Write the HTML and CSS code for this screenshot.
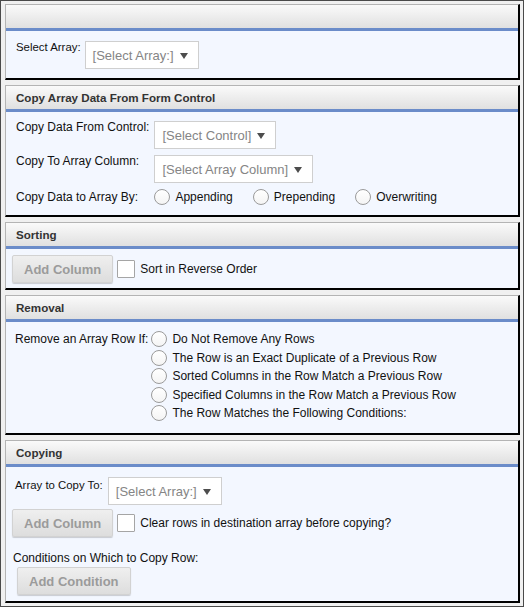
FILE: index.html
```html
<!DOCTYPE html>
<html>
<head>
<meta charset="utf-8">
<link rel="stylesheet" href="styles.css">
</head>
<body>
<div class="frame">
  <section class="panel">
    <div class="panel-head"></div>
    <div class="panel-body body-select">
      <span class="lbl lbl-sm">Select Array:</span>
      <span class="select">[Select Array:]<span class="caret"></span></span>
    </div>
  </section>

  <section class="panel">
    <div class="panel-head">Copy Array Data From Form Control</div>
    <div class="panel-body body-copyform">
      <span class="lbl">Copy Data From Control:</span>
      <div><span class="select">[Select Control]<span class="caret"></span></span></div>
      <span class="lbl">Copy To Array Column:</span>
      <div><span class="select">[Select Array Column]<span class="caret"></span></span></div>
      <span class="lbl lbl-radio">Copy Data to Array By:</span>
      <div class="radio-row">
        <label class="opt"><span class="radio"></span>Appending</label>
        <label class="opt"><span class="radio"></span>Prepending</label>
        <label class="opt"><span class="radio"></span>Overwriting</label>
      </div>
    </div>
  </section>

  <section class="panel">
    <div class="panel-head">Sorting</div>
    <div class="panel-body body-buttons">
      <span class="btn">Add Column</span>
      <span class="check"></span>
      <span class="txt">Sort in Reverse Order</span>
    </div>
  </section>

  <section class="panel">
    <div class="panel-head">Removal</div>
    <div class="panel-body body-removal">
      <span class="lbl lbl-radio">Remove an Array Row If:</span>
      <div class="radio-list">
        <label class="opt"><span class="radio"></span>Do Not Remove Any Rows</label>
        <label class="opt"><span class="radio"></span>The Row is an Exact Duplicate of a Previous Row</label>
        <label class="opt"><span class="radio"></span>Sorted Columns in the Row Match a Previous Row</label>
        <label class="opt"><span class="radio"></span>Specified Columns in the Row Match a Previous Row</label>
        <label class="opt"><span class="radio"></span>The Row Matches the Following Conditions:</label>
      </div>
    </div>
  </section>

  <section class="panel">
    <div class="panel-head">Copying</div>
    <div class="panel-body body-copying">
      <div class="row-select">
        <span class="lbl lbl-sm">Array to Copy To:</span>
        <span class="select">[Select Array:]<span class="caret"></span></span>
      </div>
      <div class="row-buttons">
        <span class="btn">Add Column</span>
        <span class="check"></span>
        <span class="txt">Clear rows in destination array before copying?</span>
      </div>
      <div class="cond-label">Conditions on Which to Copy Row:</div>
      <div class="row-cond">
        <span class="btn">Add Condition</span>
      </div>
    </div>
  </section>
</div>
</body>
</html>
```

FILE: styles.css
```css
* { box-sizing: border-box; }
html, body {
  margin: 0;
  padding: 0;
  background: #f0f0f0;
}
body {
  font-family: "Liberation Sans", Arial, sans-serif;
  color: #111;
}
.frame {
  width: 524px;
  height: 607px;
  border: 1px solid #4a4a4a;
  background: #f0f0f0;
  padding: 3px 3px 3px 4px;
  display: flex;
  flex-direction: column;
  gap: 5px;
}
.panel {
  border-top: 1px solid #b4b4b4;
  border-left: 1px solid #b4b4b4;
  border-right: 2px solid #000;
  border-bottom: 2px solid #000;
  background: #f3f7ff;
}
.panel-head {
  height: 26px;
  background: linear-gradient(#fafafa, #e0e0e0);
  border-bottom: 3px solid #6b8cc9;
  font-size: 11.6px;
  font-weight: bold;
  color: #333;
  padding: 0 0 0 10px;
  line-height: 23px;
}
.lbl {
  font-size: 12px;
  line-height: 12px;
  white-space: nowrap;
}
.lbl-sm {
  font-size: 11.4px;
}
.select {
  display: inline-flex;
  align-items: center;
  height: 28px;
  border: 1px solid #cfcfcf;
  background: #fff;
  color: #858585;
  font-size: 13px;
  padding: 0 10px 0 7px;
  gap: 6px;
  white-space: nowrap;
}
.caret {
  width: 0;
  height: 0;
  border-left: 4.5px solid transparent;
  border-right: 4.5px solid transparent;
  border-top: 6px solid #4d4d4d;
  margin-top: 2px;
}
.body-select {
  display: flex;
  align-items: flex-start;
  padding: 10px 10px 9px 10px;
  gap: 4px;
  height: 47px;
}
.body-copyform {
  display: grid;
  grid-template-columns: auto 1fr;
  column-gap: 5px;
  row-gap: 6px;
  padding: 9px 10px 10px 10px;
  align-items: start;
}
.lbl-radio {
  line-height: 16px;
}
.radio-row {
  display: flex;
  gap: 20px;
}
.opt {
  display: inline-flex;
  align-items: center;
  gap: 5px;
  font-size: 12px;
  white-space: nowrap;
}
.radio {
  width: 16px;
  height: 16px;
  border-radius: 50%;
  border: 1px solid #9a9a9a;
  background: linear-gradient(#fff, #f4f4f4);
  flex: none;
}
.body-buttons {
  display: flex;
  align-items: center;
  padding: 6px 6px 5px 6px;
  gap: 4px;
}
.btn {
  display: inline-flex;
  align-items: center;
  justify-content: center;
  height: 28px;
  padding: 0 11px;
  font-size: 13px;
  font-weight: bold;
  color: #9b9b9b;
  background: linear-gradient(#efefef, #dddddd);
  border: 1px solid #d2d2d2;
  border-radius: 2px;
  box-shadow: 0 1px 1px rgba(0, 0, 0, 0.18);
  white-space: nowrap;
}
.check {
  width: 18px;
  height: 18px;
  border: 1px solid #a5a5a5;
  background: #fff;
  border-radius: 1px;
  flex: none;
}
.txt {
  font-size: 12px;
  margin-left: 1px;
  white-space: nowrap;
}
.body-removal {
  display: flex;
  align-items: flex-start;
  padding: 9px 10px 12px 9px;
  gap: 3px;
}
.radio-list {
  display: flex;
  flex-direction: column;
  gap: 2.6px;
}
.body-copying {
  padding: 10px 6px 6px 6px;
  display: flex;
  flex-direction: column;
}
.row-select {
  display: flex;
  align-items: flex-start;
  gap: 5px;
  padding-left: 3px;
}
.row-select .lbl { margin-top: 2px; }
.row-buttons {
  display: flex;
  align-items: center;
  gap: 4px;
  margin-top: 4px;
}
.cond-label {
  font-size: 12px;
  line-height: 12px;
  margin-top: 15px;
  padding-left: 1px;
}
.row-cond {
  display: flex;
  padding-left: 5px;
  margin-top: 3px;
}
```
